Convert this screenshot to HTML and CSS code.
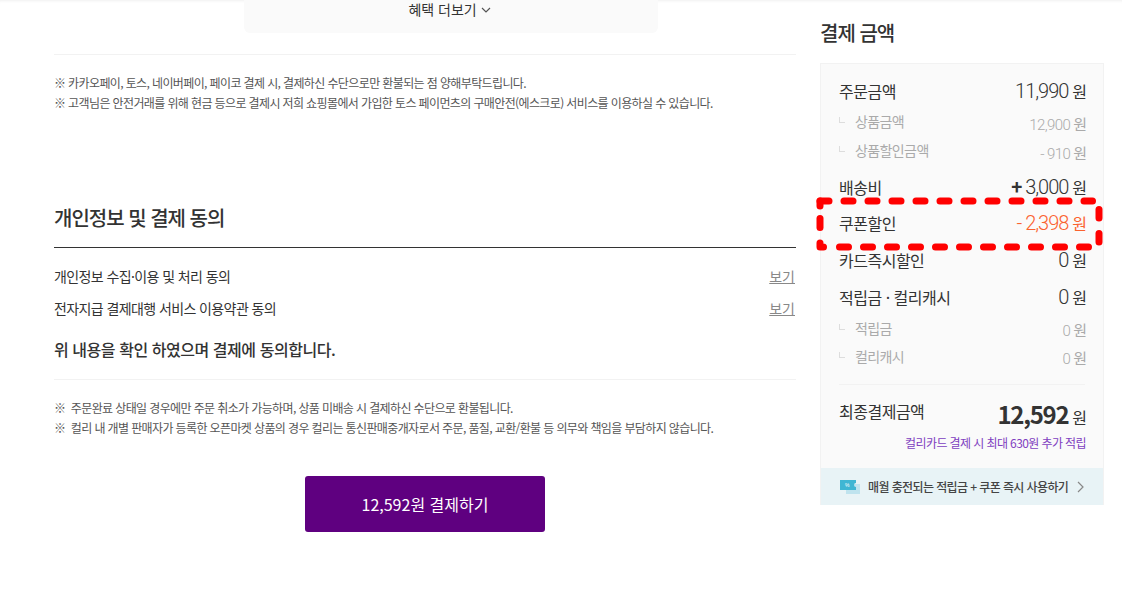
FILE: index.html
```html
<!DOCTYPE html>
<html lang="ko">
<head>
<meta charset="utf-8">
<title>결제</title>
<link rel="stylesheet" href="styles.css">
</head>
<body>
<div class="page">
  <main class="left">
    <div class="benefit">혜택 더보기 <svg class="chev" width="10" height="6" viewBox="0 0 10 6"><path d="M1 1l4 4 4-4" fill="none" stroke="#555" stroke-width="1.2"/></svg></div>
    <hr class="soft first">
    <ul class="notes top">
      <li>※ 카카오페이, 토스, 네이버페이, 페이코 결제 시, 결제하신 수단으로만 환불되는 점 양해부탁드립니다.</li>
      <li>※ 고객님은 안전거래를 위해 현금 등으로 결제시 저희 쇼핑몰에서 가입한 토스 페이먼츠의 구매안전(에스크로) 서비스를 이용하실 수 있습니다.</li>
    </ul>
    <h2 class="agree-title">개인정보 및 결제 동의</h2>
    <div class="agree-row"><span>개인정보 수집·이용 및 처리 동의</span><a class="view">보기</a></div>
    <div class="agree-row"><span>전자지급 결제대행 서비스 이용약관 동의</span><a class="view">보기</a></div>
    <p class="confirm">위 내용을 확인 하였으며 결제에 동의합니다.</p>
    <hr class="soft">
    <ul class="notes bottom">
      <li>※&nbsp; 주문완료 상태일 경우에만 주문 취소가 가능하며, 상품 미배송 시 결제하신 수단으로 환불됩니다.</li>
      <li>※&nbsp; 컬리 내 개별 판매자가 등록한 오픈마켓 상품의 경우 컬리는 통신판매중개자로서 주문, 품질, 교환/환불 등 의무와 책임을 부담하지 않습니다.</li>
    </ul>
    <button class="pay">12,592원 결제하기</button>
  </main>
  <aside class="right">
    <h2 class="sum-title">결제 금액</h2>
    <div class="card">
      <div class="card-body">
        <div class="row"><span>주문금액</span><span class="val">11,990 <i>원</i></span></div>
        <div class="row sub s1"><span class="lbl">상품금액</span><span class="val">12,900 <i>원</i></span></div>
        <div class="row sub s2"><span class="lbl">상품할인금액</span><span class="val">- 910 <i>원</i></span></div>
        <div class="row r-ship"><span>배송비</span><span class="val"><em>+</em> 3,000 <i>원</i></span></div>
        <div class="row r-coupon"><span>쿠폰할인</span><span class="val orange">- 2,398 <i>원</i></span></div>
        <div class="row r-card"><span>카드즉시할인</span><span class="val">0 <i>원</i></span></div>
        <div class="row r-point"><span>적립금 · 컬리캐시</span><span class="val">0 <i>원</i></span></div>
        <div class="row sub s3"><span class="lbl">적립금</span><span class="val">0 <i>원</i></span></div>
        <div class="row sub s4"><span class="lbl">컬리캐시</span><span class="val">0 <i>원</i></span></div>
        <div class="total"><span>최종결제금액</span><span class="total-val"><b>12,592</b> <i>원</i></span></div>
        <p class="purple">컬리카드 결제 시 최대 630원 추가 적립</p>
      </div>
      <div class="banner">
        <svg width="20" height="14" viewBox="0 0 20 14"><path d="M6 4h14v10H6z" fill="#bfe3ee"/><path d="M0 0h16v3a2 2 0 0 0 0 4v3H0z" fill="#3fb6d3"/><text x="5" y="7" font-size="5" fill="#fff" font-family="Liberation Sans">%</text></svg>
        <span>매월 충전되는 적립금 + 쿠폰 즉시 사용하기</span>
        <svg class="arrow" width="7" height="12" viewBox="0 0 7 12"><path d="M1 1l5 5-5 5" fill="none" stroke="#888" stroke-width="1.2"/></svg>
      </div>
    </div>
  </aside>
  <svg class="marker" width="296" height="60" viewBox="0 0 296 60">
    <path class="dash" d="M8 5H280.5"/>
    <path class="solid" d="M8 5V10"/>
    <path class="solid" d="M8 47V51H11.5"/>
    <path class="dash" d="M27.5 51H276.5"/>
    <path class="solid" d="M8 22.5V31.5"/>
    <path class="solid" d="M287 13.5V22"/>
    <path class="solid" d="M287 37.5V46"/>
  </svg>
</div>
</body>
</html>
```
FILE: styles.css
```css
* { box-sizing: border-box; }
html, body { margin: 0; padding: 0; background: #fff; }
body {
  width: 1122px; height: 590px; overflow: hidden;
  font-family: "Noto Sans CJK KR", "Noto Sans", sans-serif;
  color: #333;
  font-size: 14px;
  font-weight: 400;
}
.page { position: relative; display: flex; padding-left: 54px; gap: 24px; height: 590px; box-shadow: inset 0 3px 3px -2px #f0f0f0; }
.left { width: 742px; display: flex; flex-direction: column; }
.benefit {
  margin-left: 190px; width: 414px; height: 33px; padding-right: 3px; background: #fafafa; border-radius: 0 0 6px 6px;
  text-align: center; font-size: 14px; line-height: 18px; color: #333;
}
.chev { vertical-align: 2px; }
hr.soft { border: 0; height: 1px; background: #f2f2f2; margin: 0; flex: none; }
hr.first { margin-top: 21px; }
.notes { list-style: none; margin: 0; padding: 0; font-size: 12px; line-height: 20px; color: #555; letter-spacing: -0.62px; }
.notes.top { margin-top: 18px; }
.notes.bottom { margin-top: 18px; }
.agree-title {
  box-sizing: content-box; margin: 90px 0 0; font-size: 20px; line-height: 29px; height: 29px; font-weight: 500; color: #333;
  letter-spacing: -1px; border-bottom: 1px solid #333; padding-bottom: 15px;
}
.agree-row { display: flex; justify-content: space-between; font-size: 14px; line-height: 20px; color: #333; margin-top: 12px; letter-spacing: -0.6px; }
.agree-title + .agree-row { margin-top: 18px; }
.view { color: #888; text-decoration: underline; letter-spacing: 0; margin-right: 1px; }
.confirm { margin: 21px 0 20px; font-size: 16px; line-height: 20px; font-weight: 500; color: #333; letter-spacing: -0.45px; }
.pay {
  align-self: flex-start; margin: 38px 0 0 251px; width: 240px; height: 56px; border: 0; border-radius: 3px;
  background: #5f0080; color: #fff; font: 400 16px "Noto Sans CJK KR", sans-serif;
}
.right { width: 284px; display: flex; flex-direction: column; }
.sum-title { margin: 18px 0 16px; font-size: 20px; line-height: 29px; font-weight: 500; color: #333; letter-spacing: -1px; }
.card { background: #fafafa; border: 1px solid #f2f2f2; border-bottom: 0; height: 442px; display: flex; flex-direction: column; }
.card-body { flex: 1; padding: 15px 18px 0; }
.row { display: flex; justify-content: space-between; align-items: center; font-size: 16px; height: 24px; color: #333; letter-spacing: -0.5px; margin-right: -2px; }
.val { font-family: Roboto, "Noto Sans CJK KR", sans-serif; font-weight: 300; font-size: 20px; letter-spacing: -1px; }
.val em { font-style: normal; font-weight: 500; }
.val i, .total-val i { font-family: "Noto Sans CJK KR", sans-serif; font-weight: 400; font-style: normal; font-size: 16px; letter-spacing: 0; }
.orange { color: #fa622f; }
.sub { color: #aaa; font-size: 14px; letter-spacing: -0.6px; }
.sub .val { font-size: 15px; letter-spacing: -0.6px; }
.sub .val i { font-size: 15px; }
.lbl { padding-left: 16px; position: relative; top: -2px; }
.lbl::before { content: ""; position: absolute; left: 0; top: 6px; width: 5px; height: 5px; border-left: 1px solid #ddd; border-bottom: 1px solid #ddd; }
.s3 .lbl, .s4 .lbl { top: -1px; }
.s1 { margin-top: 8px; }
.s2 { margin-top: 5px; }
.s3 { margin-top: 8px; }
.s4 { margin-top: 4px; }
.r-ship { margin-top: 11px; }
.r-coupon { margin-top: 12px; }
.r-card { margin-top: 13px; }
.r-point { margin-top: 13px; }
.total { display: flex; justify-content: space-between; align-items: flex-start; margin-top: 15px; padding-top: 14px; border-top: 1px solid #f2f2f2; font-size: 16px; line-height: 24px; letter-spacing: -0.5px; }
.total-val { line-height: 24px; margin: 3px -2px 0 0; }
.total-val b { font-size: 24px; font-weight: 700; color: #333; letter-spacing: -1.3px; }
.purple { margin: 5px -1px 0 0; text-align: right; font-size: 12px; line-height: 18px; color: #8040c0; letter-spacing: -0.6px; }
.banner { display: flex; align-items: center; height: 37px; padding: 0 19px; background: #e8f3f6; font-size: 12px; font-weight: 500; color: #444; flex: none; letter-spacing: -0.6px; }
.banner span { margin-left: 8px; flex: 1; white-space: nowrap; }
.marker { position: absolute; left: 812px; top: 196px; }
.dash { fill: none; stroke: #f00; stroke-width: 7; stroke-linecap: round; stroke-dasharray: 9 15; }
.solid { fill: none; stroke: #f00; stroke-width: 7; stroke-linecap: round; stroke-linejoin: round; }
```
